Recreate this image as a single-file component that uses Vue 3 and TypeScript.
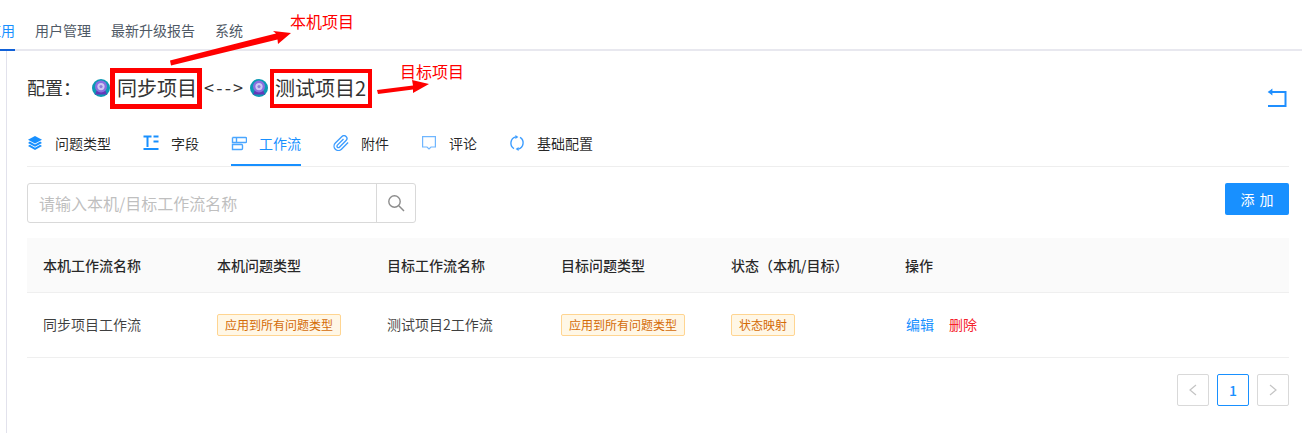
<script setup lang="ts">
interface TabItem { key: string; label: string; active?: boolean }
const navItems: string[] = ['用户管理', '最新升级报告', '系统']
const tabs: TabItem[] = [
  { key: 'layers', label: '问题类型' },
  { key: 'field', label: '字段' },
  { key: 'flow', label: '工作流', active: true },
  { key: 'clip', label: '附件' },
  { key: 'comment', label: '评论' },
  { key: 'sync', label: '基础配置' },
]
const heads: string[] = ['本机工作流名称', '本机问题类型', '目标工作流名称', '目标问题类型', '状态（本机/目标）', '操作']
</script>

<template>
  <div class="page">
    <header class="nav">
      <span class="nav-item nav-active">应用</span>
      <span v-for="n in navItems" :key="n" class="nav-item">{{ n }}</span>
    </header>

    <main class="main">
      <div class="title-row">
        <span class="title-label">配置：</span>
        <svg class="avatar" viewBox="0 0 18 18" aria-hidden="true">
          <circle cx="9" cy="9" r="9" fill="#0c9ab4" />
          <path d="M3 15.5 L5 11 H13 L15 15.5 Z" fill="#6238b8" />
          <circle cx="9" cy="7.6" r="6" fill="#8a6fe0" />
          <circle cx="9" cy="7.6" r="3.6" fill="#cfc8f4" />
          <circle cx="9" cy="7.6" r="1.6" fill="#8f80d6" />
        </svg>
        <span class="project project-a">同步项目</span>
        <span class="link-mark">&lt;--&gt;</span>
        <svg class="avatar" viewBox="0 0 18 18" aria-hidden="true">
          <circle cx="9" cy="9" r="9" fill="#0c9ab4" />
          <path d="M3 15.5 L5 11 H13 L15 15.5 Z" fill="#6238b8" />
          <circle cx="9" cy="7.6" r="6" fill="#8a6fe0" />
          <circle cx="9" cy="7.6" r="3.6" fill="#cfc8f4" />
          <circle cx="9" cy="7.6" r="1.6" fill="#8f80d6" />
        </svg>
        <span class="project project-b">测试项目2</span>
        <svg class="back" viewBox="0 0 20 20" aria-hidden="true">
          <path d="M2 4 H18.5 V18 H1" fill="none" stroke="#1f8fff" stroke-width="2" />
          <path d="M0.6 4 L5.4 0.6 V7.4 Z" fill="#1f8fff" />
        </svg>
      </div>

      <nav class="tabs">
        <div v-for="t in tabs" :key="t.key" class="tab" :class="{ 'tab-active': t.active }">
          <svg class="tab-icon" viewBox="0 0 16 16" aria-hidden="true">
            <template v-if="t.key === 'layers'">
              <path d="M8 1 L15 4.8 L8 8.6 L1 4.8 Z" fill="#1890ff" />
              <path d="M2.8 6.6 L8 9.5 L13.2 6.6 L15 7.9 L8 11.8 L1 7.9 Z" fill="#1890ff" />
              <path d="M2.8 9.8 L8 12.7 L13.2 9.8 L15 11.1 L8 15 L1 11.1 Z" fill="#1890ff" />
            </template>
            <template v-else-if="t.key === 'field'">
              <path d="M0.5 1.5 H8.5 M4.5 1.5 V12 M10.5 1.5 H15.5 M10.5 6.5 H15.5 M0.5 14 H15.5" stroke="#1890ff" stroke-width="2" fill="none" />
            </template>
            <template v-else-if="t.key === 'flow'">
              <path d="M5.5 2.5 H14.5 A1 1 0 0 1 15.5 3.5 V6.5 A1 1 0 0 1 14.5 7.5 H5.5 Z M1.5 2.5 H5.5 M1.5 2.5 V7.5 H5.5 M1.5 9.5 H10.5 A1 1 0 0 1 11.5 10.5 V13.5 A1 1 0 0 1 10.5 14.5 H1.5 Z" stroke="#4aa6ff" stroke-width="1.4" fill="none" />
            </template>
            <template v-else-if="t.key === 'clip'">
              <g transform="scale(0.72) translate(-0.5 -0.5)">
                <path d="M21.44 11.05l-9.19 9.19a6 6 0 0 1-8.49-8.49l9.19-9.19a4 4 0 0 1 5.66 5.66l-9.2 9.19a2 2 0 0 1-2.83-2.83l8.49-8.48" stroke="#3d9dff" stroke-width="1.9" fill="none" />
              </g>
            </template>
            <template v-else-if="t.key === 'comment'">
              <path d="M1.6 1.6 H14.4 V12 H10 L8 14 L6 12 H1.6 Z" stroke="#6fb6ff" stroke-width="1.2" fill="none" />
            </template>
            <template v-else>
              <path d="M5 13.6 A6.4 6.4 0 0 1 6.8 1.9" stroke="#3d9dff" stroke-width="1.4" fill="none" />
              <path d="M11 2.4 A6.4 6.4 0 0 1 9.2 14.1" stroke="#3d9dff" stroke-width="1.4" fill="none" />
              <path d="M6.4 0 L9.4 2 L6.4 4 Z M9.6 12 L6.6 14 L9.6 16 Z" fill="#3d9dff" />
            </template>
          </svg>
          <span>{{ t.label }}</span>
        </div>
      </nav>

      <div class="toolbar">
        <div class="search">
          <input class="search-input" type="text" placeholder="请输入本机/目标工作流名称" />
          <span class="search-btn">
            <svg width="18" height="18" viewBox="0 0 18 18" aria-hidden="true">
              <circle cx="7.5" cy="7.5" r="5.7" fill="none" stroke="#8c8c8c" stroke-width="1.4" />
              <path d="M11.8 11.8 L17 17" stroke="#8c8c8c" stroke-width="1.5" />
            </svg>
          </span>
        </div>
        <button class="add" type="button">添 加</button>
      </div>

      <div class="table">
        <div class="tr thead">
          <div v-for="h in heads" :key="h" class="td">{{ h }}</div>
        </div>
        <div class="tr tbody">
          <div class="td">同步项目工作流</div>
          <div class="td"><span class="tag">应用到所有问题类型</span></div>
          <div class="td">测试项目2工作流</div>
          <div class="td"><span class="tag">应用到所有问题类型</span></div>
          <div class="td"><span class="tag">状态映射</span></div>
          <div class="td actions"><a class="edit">编辑</a><a class="del">删除</a></div>
        </div>
      </div>

      <div class="pager">
        <span class="pg">
          <svg width="10" height="12" viewBox="0 0 10 12" aria-hidden="true"><path d="M8 1 L2 6 L8 11" fill="none" stroke="#c4c4c4" stroke-width="1.2" /></svg>
        </span>
        <span class="pg pg-active">1</span>
        <span class="pg">
          <svg width="10" height="12" viewBox="0 0 10 12" aria-hidden="true"><path d="M2 1 L8 6 L2 11" fill="none" stroke="#c4c4c4" stroke-width="1.2" /></svg>
        </span>
      </div>
    </main>

    <svg class="marks" width="1302" height="433" viewBox="0 0 1302 433" aria-hidden="true">
      <path d="M170 60.5 L276 33.5 L273 31 L291 33 L278 44 L277.5 39.5 L171 65.5 Z" fill="#ff0000" />
      <path d="M377 90 L413 85.5 L412 80 L429 84 L413 93 L413 89.5 L378 94 Z" fill="#ff0000" />
    </svg>
    <span class="note note-a">本机项目</span>
    <span class="note note-b">目标项目</span>
  </div>
</template>

<style>
html, body { margin: 0; background: #fff; overflow: hidden; }
</style>

<style scoped>
.page {
  position: relative;
  width: 1302px;
  height: 433px;
  overflow: hidden;
  background: #fff;
  font-family: "Noto Sans CJK SC", "Liberation Sans", sans-serif;
  font-size: 14px;
  color: rgba(0, 0, 0, 0.75);
}
.nav {
  display: flex;
  gap: 20px;
  height: 49px;
  margin-left: -13px;
  border-bottom: 2px solid #e8e8ef;
}
.nav-item {
  line-height: 61px;
  height: 51px;
  color: #4f5966;
  flex: none;
  box-sizing: border-box;
}
.nav-active {
  color: #1890ff;
  border-bottom: 2px solid #1161d8;
}
.main {
  margin-left: 6px;
  height: 382px;
  box-sizing: border-box;
  border-left: 1px solid #e2e2ec;
  padding: 16px 13px 0 20px;
}
.title-row {
  display: flex;
  align-items: center;
  height: 42px;
  color: #333;
  font-size: 18px;
}
.title-label { width: 65px; flex: none; padding-bottom: 2px; }
.avatar { width: 18px; height: 18px; flex: none; }
.project {
  box-sizing: border-box;
  font-size: 20px;
  height: 41px;
  line-height: 29px;
  border: 5px solid #ff0000;
  white-space: nowrap;
  flex: none;
}
.project-a { width: 92px; padding-left: 2px; }
.project-b { width: 102px; border-width: 4px; padding-left: 1px; margin-left: 2px; height: 39px; line-height: 29px; }
.link-mark {
  width: 48px;
  padding: 0 0 2px 2px;
  box-sizing: border-box;
  flex: none;
  letter-spacing: 2.2px;
  white-space: nowrap;
}
.back {
  width: 20px;
  height: 20px;
  margin-left: auto;
  margin-right: 2px;
  align-self: flex-end;
  margin-bottom: 1px;
}
.tabs {
  display: flex;
  gap: 32px;
  height: 45px;
  margin-top: 13px;
  border-bottom: 1px solid #eee;
  box-sizing: border-box;
  color: rgba(0, 0, 0, 0.85);
}
.tab {
  display: flex;
  align-items: center;
  gap: 12px;
  height: 44px;
  box-sizing: border-box;
  border-bottom: 2px solid transparent;
  margin-bottom: -1px;
}
.tab-active { color: #1890ff; border-bottom-color: #1890ff; }
.tab-icon { width: 16px; height: 16px; flex: none; }
.toolbar {
  display: flex;
  justify-content: space-between;
  align-items: flex-start;
  margin-top: 16px;
}
.search {
  display: flex;
  width: 389px;
  height: 40px;
  box-sizing: border-box;
  border: 1px solid #d9d9d9;
  border-radius: 3px;
}
.search-input {
  flex: 1;
  min-width: 0;
  border: 0;
  outline: 0;
  padding: 0 11px;
  background: transparent;
  font-family: inherit;
  font-size: 16px;
  color: #333;
}
.search-input::placeholder { color: #bfbfbf; opacity: 1; }
.search-btn {
  width: 39px;
  box-sizing: border-box;
  border-left: 1px solid #d9d9d9;
  display: flex;
  align-items: center;
  justify-content: center;
  flex: none;
}
.add {
  width: 64px;
  height: 32px;
  border: 0;
  border-radius: 2px;
  background: #1890ff;
  color: #fff;
  font-family: inherit;
  font-size: 14px;
  word-spacing: 2px;
  padding: 0;
}
.table { margin-top: 15px; }
.tr {
  display: grid;
  grid-template-columns: 174px 170px 174px 170px 174px 1fr;
  height: 65px;
  box-sizing: border-box;
  border-bottom: 1px solid #efefef;
  align-items: center;
}
.tbody { padding-bottom: 2px; }
.thead {
  height: 55px;
  background: #fafafa;
  font-weight: 500;
  color: rgba(0, 0, 0, 0.85);
}
.td { padding-left: 16px; white-space: nowrap; }
.tag {
  display: inline-block;
  box-sizing: border-box;
  height: 22px;
  line-height: 20px;
  padding: 0 7px;
  font-size: 12px;
  background: #fff7e6;
  border: 1px solid #ffd591;
  border-radius: 2px;
  color: #d46b08;
  vertical-align: middle;
}
.actions { display: flex; gap: 15px; padding-left: 17px; }
.edit { color: #1890ff; }
.del { color: #f5222d; }
.pager {
  display: flex;
  justify-content: flex-end;
  gap: 8px;
  margin-top: 16px;
}
.pg {
  box-sizing: border-box;
  width: 32px;
  height: 32px;
  border: 1px solid #d9d9d9;
  border-radius: 2px;
  display: flex;
  align-items: center;
  justify-content: center;
  font-weight: 500;
}
.pg-active { border-color: #1890ff; color: #1890ff; }
.marks { position: absolute; left: 0; top: 0; pointer-events: none; }
.note {
  position: absolute;
  color: #ff0000;
  font-size: 16px;
  line-height: 22px;
}
.note-a { left: 290px; top: 10px; }
.note-b { left: 400px; top: 60px; }
</style>
